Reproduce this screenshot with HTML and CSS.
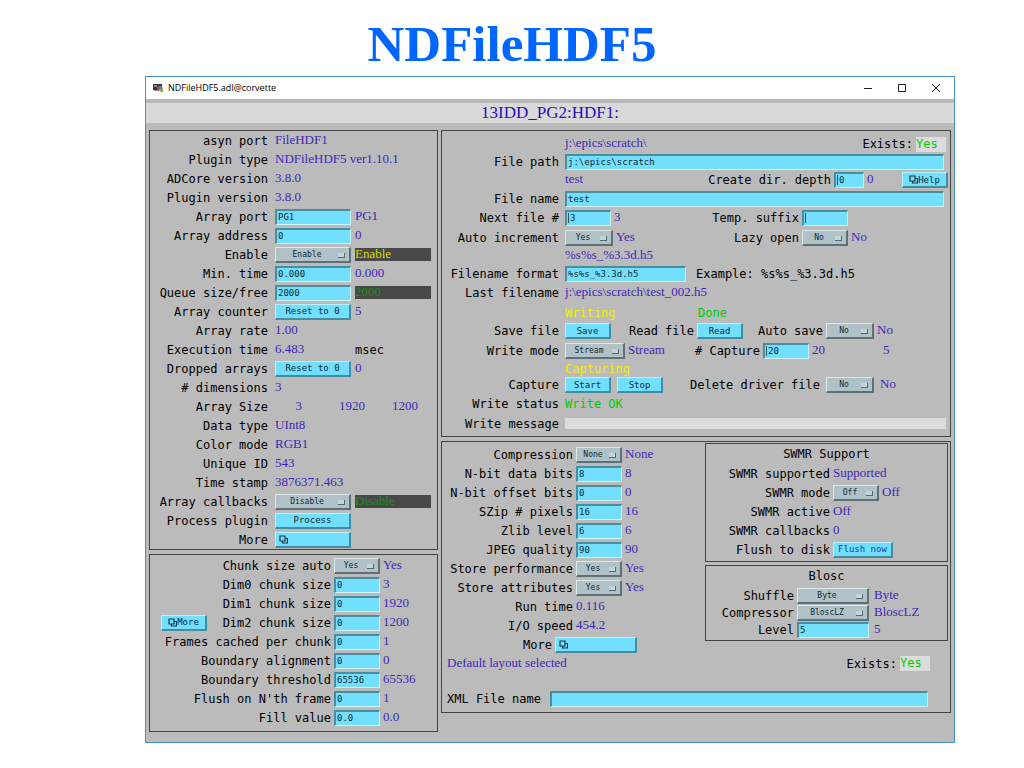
FILE: index.html
```html
<!DOCTYPE html>
<html lang="en">
<head>
<meta charset="utf-8">
<title>NDFileHDF5</title>
<link rel="stylesheet" href="styles.css">
</head>
<body>
<svg class="defs" aria-hidden="true">
  <symbol id="related" viewBox="0 0 9 9"><path d="M1 1h5v5H1zM3.500 6v2H8.500V3.500H6" fill="none" stroke="#123c4c" stroke-width="1.200"/></symbol>
</svg>
<h1 class="heading">NDFileHDF5</h1>
<main class="window">
  <header class="titlebar">
    <svg class="app-icon" viewBox="0 0 12 10"><path d="M1 1h9v6H1z" fill="#35363c"/><path d="M2 2h3v2H2z" fill="#8c9096"/><path d="M5 4l5-1 1 4-5 1z" fill="#b3524a"/><path d="M7 6h4v3H8z" fill="#6cc24a"/><path d="M6 3h4v1H6z" fill="#5576c4"/><path d="M2 7h4v1H2z" fill="#8c9096"/></svg>
    <span class="window-name">NDFileHDF5.adl@corvette</span>
    <button class="win-btn" aria-label="Minimize"><svg viewBox="0 0 10 10"><path d="M1 5.500h8"/></svg></button>
    <button class="win-btn" aria-label="Maximize"><svg viewBox="0 0 10 10"><path d="M1.500 1.500h7v7h-7z"/></svg></button>
    <button class="win-btn" aria-label="Close"><svg viewBox="0 0 10 10"><path d="M1 1l8 8M9 1l-8 8"/></svg></button>
  </header>
  <h2 class="prefix">13IDD_PG2:HDF1:</h2>
  <div class="columns">
    <div class="column">
      <section class="panel plugin">
        <div class="row"><span class="label">asyn port</span><span class="value">FileHDF1</span></div>
        <div class="row"><span class="label">Plugin type</span><span class="value">NDFileHDF5 ver1.10.1</span></div>
        <div class="row"><span class="label">ADCore version</span><span class="value">3.8.0</span></div>
        <div class="row"><span class="label">Plugin version</span><span class="value">3.8.0</span></div>
        <div class="row"><label class="label" for="port">Array port</label><input id="port" value="PG1"><span class="value">PG1</span></div>
        <div class="row"><label class="label" for="addr">Array address</label><input id="addr" value="0"><span class="value">0</span></div>
        <div class="row"><label class="label" for="enable">Enable</label><select id="enable"><option>Enable</option><option>Disable</option></select><span class="value state on">Enable</span></div>
        <div class="row"><label class="label" for="mint">Min. time</label><input id="mint" value="0.000"><span class="value">0.000</span></div>
        <div class="row"><label class="label" for="queue">Queue size/free</label><input id="queue" value="2000"><span class="value state">2000</span></div>
        <div class="row"><span class="label" id="l-counter">Array counter</span><button class="btn" aria-describedby="l-counter">Reset to 0</button><span class="value">5</span></div>
        <div class="row"><span class="label">Array rate</span><span class="value">1.00</span></div>
        <div class="row"><span class="label">Execution time</span><span class="value timing">6.483</span><span class="text">msec</span></div>
        <div class="row"><span class="label" id="l-drop">Dropped arrays</span><button class="btn" aria-describedby="l-drop">Reset to 0</button><span class="value">0</span></div>
        <div class="row"><span class="label"># dimensions</span><span class="value">3</span></div>
        <div class="row"><span class="label">Array Size</span><span class="value dims"><span>3</span><span>1920</span><span>1200</span></span></div>
        <div class="row"><span class="label">Data type</span><span class="value">UInt8</span></div>
        <div class="row"><span class="label">Color mode</span><span class="value">RGB1</span></div>
        <div class="row"><span class="label">Unique ID</span><span class="value">543</span></div>
        <div class="row"><span class="label">Time stamp</span><span class="value">3876371.463</span></div>
        <div class="row"><label class="label" for="callbacks">Array callbacks</label><select id="callbacks"><option>Disable</option><option>Enable</option></select><span class="value state">Disable</span></div>
        <div class="row"><span class="label" id="l-proc">Process plugin</span><button class="btn" aria-describedby="l-proc">Process</button></div>
        <div class="row"><span class="label" id="l-more1">More</span><button class="btn menu" aria-labelledby="l-more1"><svg><use href="#related"/></svg></button></div>
      </section>
      <section class="panel chunk">
        <div class="row"><label class="label" for="auto">Chunk size auto</label><select id="auto"><option>Yes</option><option>No</option></select><span class="value">Yes</span></div>
        <div class="row"><label class="label" for="dim0">Dim0 chunk size</label><input id="dim0" value="0"><span class="value">3</span></div>
        <div class="row"><label class="label" for="dim1">Dim1 chunk size</label><input id="dim1" value="0"><span class="value">1920</span></div>
        <div class="row"><button class="btn more-dims"><svg><use href="#related"/></svg>More</button><label class="label after-btn" for="dim2">Dim2 chunk size</label><input id="dim2" value="0"><span class="value">1200</span></div>
        <div class="row"><label class="label" for="frames">Frames cached per chunk</label><input id="frames" value="0"><span class="value">1</span></div>
        <div class="row"><label class="label" for="align">Boundary alignment</label><input id="align" value="0"><span class="value">0</span></div>
        <div class="row"><label class="label" for="thresh">Boundary threshold</label><input id="thresh" value="65536"><span class="value">65536</span></div>
        <div class="row"><label class="label" for="nth">Flush on N'th frame</label><input id="nth" value="0"><span class="value">1</span></div>
        <div class="row"><label class="label" for="fill">Fill value</label><input id="fill" value="0.0"><span class="value">0.0</span></div>
      </section>
    </div>
    <div class="column">
      <section class="panel file">
        <div class="row"><span class="label"></span><span class="value grow">j:\epics\scratch\</span><span class="text">Exists:</span><span class="exists">Yes</span></div>
        <div class="row"><label class="label" for="path">File path</label><input id="path" class="long" value="j:\epics\scratch"></div>
        <div class="row"><span class="label"></span><span class="value grow">test</span><label class="text" for="depth">Create dir. depth</label><input id="depth" class="tiny caret" value="0"><span class="value depth">0</span><button class="btn help"><svg><use href="#related"/></svg>Help</button></div>
        <div class="row"><label class="label" for="name">File name</label><input id="name" class="long" value="test"></div>
        <div class="row"><label class="label" for="next">Next file #</label><input id="next" class="caret" value="3"><span class="value v-mid">3</span><label class="text t-opt" for="suffix">Temp. suffix</label><input id="suffix" class="caret" value=""></div>
        <div class="row"><label class="label" for="incr">Auto increment</label><select id="incr"><option>Yes</option><option>No</option></select><span class="value v-mid">Yes</span><label class="text t-opt t-lazy" for="lazy">Lazy open</label><select id="lazy" class="lazy"><option>No</option><option>Yes</option></select><span class="value">No</span></div>
        <div class="row"><span class="label"></span><span class="value">%s%s_%3.3d.h5</span></div>
        <div class="row"><label class="label" for="format">Filename format</label><input id="format" class="format" value="%s%s_%3.3d.h5"><span class="text example">Example: %s%s_%3.3d.h5</span></div>
        <div class="row"><span class="label">Last filename</span><span class="value">j:\epics\scratch\test_002.h5</span></div>
        <div class="row"><span class="label"></span><span class="busy v-status">Writing</span><span class="ok">Done</span></div>
        <div class="row"><span class="label" id="l-save">Save file</span><button class="btn" aria-describedby="l-save">Save</button><span class="text t-read">Read file</span><button class="btn">Read</button><label class="text t-auto" for="autosave">Auto save</label><select id="autosave"><option>No</option><option>Yes</option></select><span class="value">No</span></div>
        <div class="row"><label class="label" for="mode">Write mode</label><select id="mode" class="mode"><option>Stream</option><option>Single</option><option>Capture</option></select><span class="value v-mode">Stream</span><label class="text t-cap" for="ncap"># Capture</label><input id="ncap" class="caret" value="20"><span class="value v-cap">20</span><span class="value">5</span></div>
        <div class="row"><span class="label"></span><span class="busy">Capturing</span></div>
        <div class="row capture"><span class="label" id="l-cap">Capture</span><button class="btn" aria-describedby="l-cap">Start</button><button class="btn" aria-describedby="l-cap">Stop</button><label class="text t-delete" for="del">Delete driver file</label><select id="del"><option>No</option><option>Yes</option></select><span class="value">No</span></div>
        <div class="row"><span class="label">Write status</span><span class="ok">Write OK</span></div>
        <div class="row"><span class="label">Write message</span><output class="message"></output></div>
      </section>
      <section class="panel format-panel">
        <div class="split">
          <div class="codec">
            <div class="row"><label class="label" for="comp">Compression</label><select id="comp"><option>None</option><option>szip</option><option>zlib</option></select><span class="value">None</span></div>
            <div class="row"><label class="label" for="nbit">N-bit data bits</label><input id="nbit" value="8"><span class="value">8</span></div>
            <div class="row"><label class="label" for="noff">N-bit offset bits</label><input id="noff" value="0"><span class="value">0</span></div>
            <div class="row"><label class="label" for="szip">SZip # pixels</label><input id="szip" value="16"><span class="value">16</span></div>
            <div class="row"><label class="label" for="zlib">Zlib level</label><input id="zlib" value="6"><span class="value">6</span></div>
            <div class="row"><label class="label" for="jpeg">JPEG quality</label><input id="jpeg" value="90"><span class="value">90</span></div>
            <div class="row"><label class="label" for="perf">Store performance</label><select id="perf"><option>Yes</option><option>No</option></select><span class="value">Yes</span></div>
            <div class="row"><label class="label" for="attr">Store attributes</label><select id="attr"><option>Yes</option><option>No</option></select><span class="value">Yes</span></div>
            <div class="row"><span class="label">Run time</span><span class="value">0.116</span></div>
            <div class="row"><span class="label">I/O speed</span><span class="value">454.2</span></div>
            <div class="row"><span class="label more-label" id="l-more2">More</span><button class="btn menu wide" aria-labelledby="l-more2"><svg><use href="#related"/></svg></button></div>
          </div>
          <div class="side">
            <section class="panel swmr">
              <h3 class="panel-title">SWMR Support</h3>
              <div class="row"><span class="label">SWMR supported</span><span class="value">Supported</span></div>
              <div class="row"><label class="label" for="swmr">SWMR mode</label><select id="swmr"><option>Off</option><option>On</option></select><span class="value">Off</span></div>
              <div class="row"><span class="label">SWMR active</span><span class="value">Off</span></div>
              <div class="row"><span class="label">SWMR callbacks</span><span class="value">0</span></div>
              <div class="row"><span class="label" id="l-flush">Flush to disk</span><button class="btn flush" aria-describedby="l-flush">Flush now</button></div>
            </section>
            <section class="panel blosc">
              <h3 class="panel-title">Blosc</h3>
              <div class="row"><label class="label" for="shuffle">Shuffle</label><select id="shuffle"><option>Byte</option><option>Bit</option><option>None</option></select><span class="value">Byte</span></div>
              <div class="row"><label class="label" for="compressor">Compressor</label><select id="compressor"><option>BloscLZ</option><option>LZ4</option></select><span class="value">BloscLZ</span></div>
              <div class="row"><label class="label" for="level">Level</label><input id="level" value="5"><span class="value">5</span></div>
            </section>
          </div>
        </div>
        <div class="row layout-row"><span class="value grow">Default layout selected</span><span class="text">Exists:</span><span class="exists">Yes</span></div>
        <div class="row xml-row"><label class="text" for="xml">XML File name</label><input id="xml" class="long" value=""></div>
      </section>
    </div>
  </div>
</main>
</body>
</html>
```
FILE: styles.css
```css
* { box-sizing: border-box; }

body {
  margin: 0;
  background: #fff;
  color: #000;
  font: 12px/16px "DejaVu Sans Mono", monospace;
}

.defs { display: none; }

.heading {
  margin: 0;
  padding-top: 12px;
  font: bold 51px/64px "Liberation Serif", serif;
  color: #06f;
  text-align: center;
}

.window {
  margin: 0 69px 24px 145px;
  border: 1px solid #4a90c8;
  background: #bbb;
}

.titlebar {
  display: flex;
  align-items: center;
  height: 22px;
  padding: 0 1px 0 6px;
  background: #fff;
}
.app-icon { width: 12px; height: 10px; margin-right: 4px; }
.window-name { flex: 1; font: 9px/12px "Open Sans", sans-serif; }
.win-btn {
  width: 34px;
  height: 22px;
  padding: 0;
  border: 0;
  background: none;
}
.win-btn svg { display: block; width: 10px; height: 10px; margin: auto; fill: none; stroke: #222; }

.prefix {
  margin: 0 0 7px;
  border-top: 4px solid #b8b8b8;
  background: #d9d9d9;
  color: #2a10b8;
  font: 17px/20px "Liberation Serif", serif;
  text-align: center;
}

.columns {
  display: grid;
  grid-template-columns: 289px minmax(0, 1fr);
  gap: 3px;
  padding: 0 3px 10px;
  align-items: start;
}
.column { display: grid; gap: 4px; }
.panel { border: 1px solid #444; }
.panel-title { margin: 0; font: inherit; line-height: 20px; text-align: center; }

.row { display: flex; align-items: center; gap: 3px; height: 19px; white-space: nowrap; }
.label { flex: none; text-align: right; }
.text { flex: none; }
.grow { flex: 1; }
.value { padding-bottom: 3px; color: #3c28b8; font: 13px/13px "Liberation Serif", serif; }
.busy { color: #f0f000; }
.ok { color: #0c0; }
.exists { width: 30px; margin-right: 4px; background: #dcdcdc; color: #0c0; line-height: 15px; }

input, select, .btn {
  flex: none;
  width: 46px;
  height: 16px;
  margin: 0;
  border: 1px solid;
  border-radius: 0;
  background-color: #73dfff;
  color: #0c2a36;
  font: 9px/12px "DejaVu Sans Mono", monospace;
}
input { padding: 0 0 1px 1px; border-width: 2px 1px 1px 2px; border-color: #4a8ca0 #c4f2ff #d4f6ff #4a8ca0; }
.caret {
  padding-left: 3px;
  background-image: linear-gradient(#285866, #285866);
  background-repeat: no-repeat;
  background-position: 1px 1px;
  background-size: 1px 10px;
}
.btn {
  display: inline-flex;
  align-items: center;
  justify-content: center;
  padding: 0;
  border-width: 1px 2px 2px 1px;
  border-color: #b8f0ff #468ca0 #468ca0 #b8f0ff;
}
.btn svg { width: 9px; height: 9px; }
.btn.menu { justify-content: flex-start; padding-left: 3px; }
select {
  appearance: none;
  padding: 1px 11px 0 0;
  border-width: 1px 2px 2px 1px;
  border-color: #dce8ea #5c7076 #5c7076 #dce8ea;
  background-color: #b0c2c7;
  background-image: linear-gradient(#c4d4d8, #c4d4d8), linear-gradient(#54686e, #54686e);
  background-repeat: no-repeat;
  background-position: right 5px top 5px, right 4px top 5px;
  background-size: 6px 4px, 7px 5px;
  font-size: 8px;
  text-align-last: center;
}

.plugin .row { gap: 4px; }
.plugin .label { width: 118px; margin-right: 3px; }
.plugin input, .plugin select, .plugin .btn { width: 76px; }
.timing { width: 76px; }
.plugin .state { width: 76px; height: 13px; padding: 0; background: #484848; color: #189018; line-height: 12px; }
.plugin .on { color: #d8d800; }
.dims { display: flex; }
.dims span { width: 53px; text-align: right; }
.dims span:first-child { width: 27px; }
.dims span:nth-child(2) { width: 63px; }

.chunk { padding: 1px 0 4px; }
.chunk .label { width: 181px; }
.more-dims { margin-left: 11px; }
.chunk .after-btn { flex: none; width: 121px; }

.file {
  display: grid;
  grid-template-rows: 18px 18px 18px 19px 20px 19px 17px 19px 20px 19px 18px 21px 15px 18px 20px 19px;
  padding: 4px 0 3px;
}
.file .row { height: auto; }
.file .label { width: 117px; margin-right: 3px; }
.file select { width: 48px; }
.file .mode { width: 60px; }
.file .tiny { width: 30px; }
.depth { width: 32px; }
.help { margin-right: 2px; }
.file .long { flex: 1; margin-right: 6px; }
.v-mid { width: 60px; }
.t-opt { width: 122px; text-align: right; }
.t-lazy { width: 120px; }
.file .lazy { width: 46px; }
.file .format { width: 121px; }
.example { margin-left: 7px; }
.v-status { width: 130px; }
.t-read { width: 80px; text-align: right; }
.t-auto { width: 77px; text-align: right; }
.v-mode { width: 55px; }
.t-cap { width: 74px; text-align: right; }
.v-cap { width: 68px; }
.file .capture { gap: 6px; }
.capture .label { margin-right: 0; }
.t-delete { width: 151px; text-align: right; }
.message { flex: 1; height: 11px; margin-right: 4px; background: #dcdcdc; }

.format-panel { padding: 1px 2px 4px 0; }
.split { display: grid; grid-template-columns: 263px minmax(0, 1fr); }
.codec { padding-top: 2px; }
.codec .label { width: 131px; }
.codec .more-label { width: 110px; }
.codec .wide { width: 82px; }
.side { display: grid; gap: 3px; align-content: start; }
.swmr { padding-bottom: 2px; }
.swmr .label { width: 124px; }
.btn.flush { width: 60px; color: #1038c8; }
.blosc { padding-bottom: 2px; }
.blosc .panel-title { margin-bottom: 1px; }
.blosc .row { height: 17px; }
.blosc .label { width: 88px; }
.blosc input, .blosc select { width: 72px; }
.blosc .value { margin-left: 2px; }
.layout-row { padding: 0 14px 0 5px; }
.xml-row { gap: 9px; margin-top: 16px; padding: 0 20px 0 5px; }
.xml-row .long { flex: 1; }
```
